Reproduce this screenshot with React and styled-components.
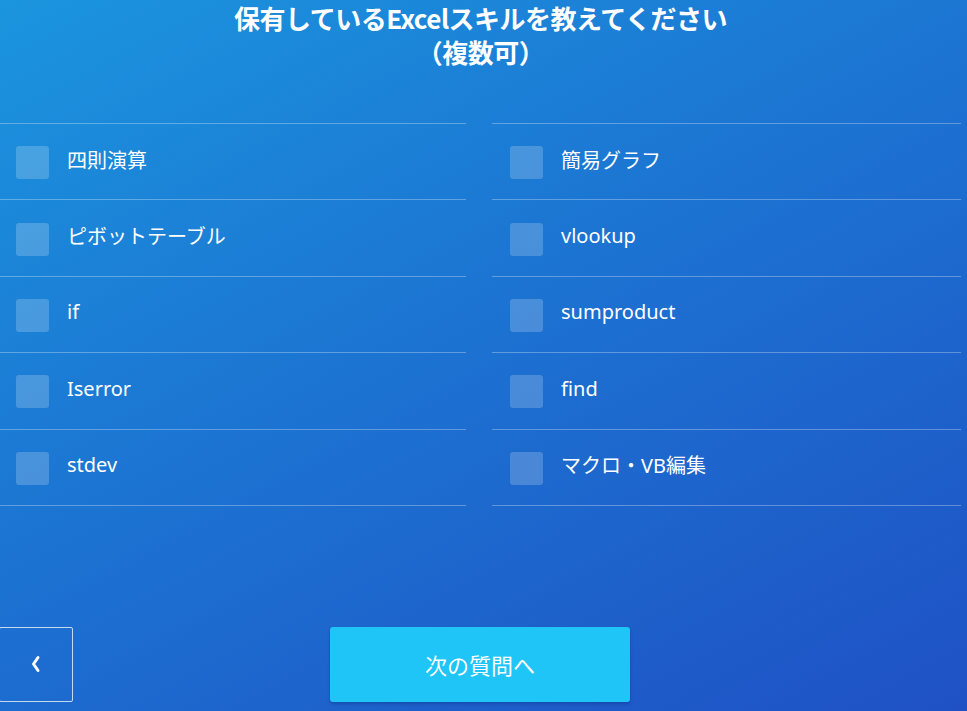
import React from 'react';
import styled, { createGlobalStyle } from 'styled-components';

const GlobalStyle = createGlobalStyle`
  html, body {
    margin: 0;
    padding: 0;
  }
  body {
    font-family: "Noto Sans", "Noto Sans CJK JP", sans-serif;
    overflow: hidden;
  }
`;

const Page = styled.div`
  width: 967px;
  height: 711px;
  box-sizing: border-box;
  display: flex;
  flex-direction: column;
  color: #fff;
  background: linear-gradient(152deg, #1b95de 0%, #1c74d2 45%, #1f51c5 100%);
`;

const Title = styled.h1`
  margin: 0 0 0 -6px;
  padding-top: 1px;
  text-align: center;
  font-family: "Noto Sans CJK JP", sans-serif;
  font-size: 26px;
  font-weight: 700;
  line-height: 34px;
  letter-spacing: -0.5px;
`;

const Options = styled.div`
  display: grid;
  grid-template-columns: 468px 469px;
  column-gap: 26px;
  margin: 54px 0 0 -2px;
`;

const Column = styled.div`
  display: flex;
  flex-direction: column;
  border-bottom: 1px solid rgba(255, 255, 255, 0.3);
`;

const Option = styled.label`
  display: flex;
  align-items: center;
  gap: 18px;
  height: 76.4px;
  box-sizing: border-box;
  padding: 2px 0 0 18px;
  border-top: 1px solid rgba(255, 255, 255, 0.3);
  font-family: "Noto Sans", "Noto Sans CJK JP", sans-serif;
  font-size: 20px;
  cursor: pointer;
`;

const Box = styled.span`
  width: 33px;
  height: 33px;
  border-radius: 3px;
  background: rgba(255, 255, 255, 0.2);
  flex-shrink: 0;
`;

const OptionText = styled.span`
  margin-top: -7px;
`;

const Footer = styled.div`
  display: flex;
  align-items: center;
  margin-top: 121px;
`;

const BackButton = styled.button`
  width: 74px;
  height: 75px;
  margin-left: -1px;
  box-sizing: border-box;
  border: 1px solid rgba(255, 255, 255, 0.75);
  border-radius: 2px;
  background: transparent;
  color: #fff;
  display: flex;
  align-items: center;
  justify-content: center;
  padding: 0;
  cursor: pointer;
`;

const NextButton = styled.button`
  width: 300px;
  height: 75px;
  margin-left: 257px;
  border: none;
  border-radius: 3px;
  background: #1ec5f6;
  color: #fff;
  font-family: "Noto Sans CJK JP", sans-serif;
  font-size: 22px;
  box-shadow: 0 2px 3px rgba(10, 40, 120, 0.35);
  cursor: pointer;
`;

const leftItems = ['四則演算', 'ピボットテーブル', 'if', 'Iserror', 'stdev'];
const rightItems = ['簡易グラフ', 'vlookup', 'sumproduct', 'find', 'マクロ・VB編集'];

const App = () => {
  return (
    <Page>
      <GlobalStyle />
      <Title>
        保有しているExcelスキルを教えてください
        <br />
        （複数可）
      </Title>
      <Options>
        {[leftItems, rightItems].map((items, i) => (
          <Column key={i}>
            {items.map((name) => (
              <Option key={name}>
                <Box />
                <OptionText>{name}</OptionText>
              </Option>
            ))}
          </Column>
        ))}
      </Options>
      <Footer>
        <BackButton aria-label="戻る">
          <svg width="12" height="20" viewBox="0 0 12 20">
            <path
              d="M8 3.5 L3.5 10 L8 16.5"
              fill="none"
              stroke="#fff"
              strokeWidth="3"
              strokeLinecap="round"
              strokeLinejoin="round"
            />
          </svg>
        </BackButton>
        <NextButton>次の質問へ</NextButton>
      </Footer>
    </Page>
  );
};

export default App;
